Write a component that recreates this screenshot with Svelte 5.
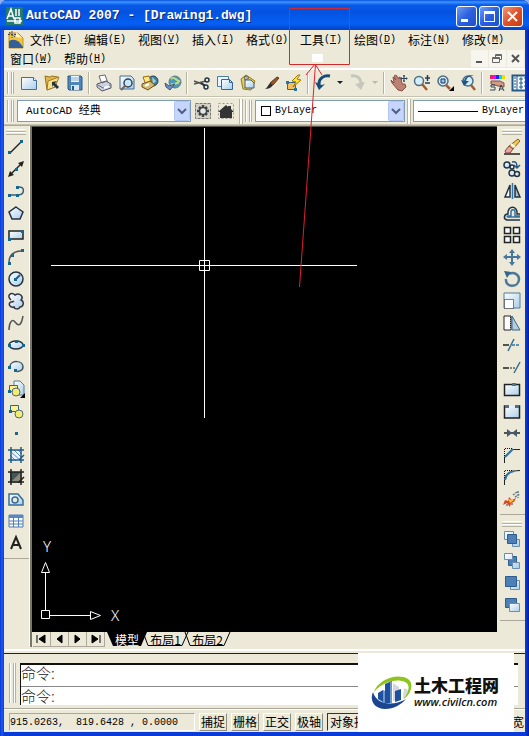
<script>
  const menus = [
    ['文件', 'F'], ['编辑', 'E'], ['视图', 'V'], ['插入', 'I'], ['格式', 'O'], ['工具', 'T'],
    ['绘图', 'D'], ['标注', 'N'], ['修改', 'M'], ['窗口', 'W'], ['帮助', 'H']
  ];

  const standard = [
    { n: 'New', d: '<path d="M1.500 3.500h12l3 3v9h-15z" fill="url(#pane)" stroke="#456f98"/><path d="M13.500 3.500v3h3" fill="#fff" stroke="#456f98"/>' },
    { n: 'Open', d: '<path d="M2 2l5 1 2-1 6 1-3 10-8 3z" fill="#e3b844" stroke="#987120"/><path d="M5 7l11-4-4 10-8 3z" fill="#f7e28c" stroke="#a37b24"/><path d="M9 8l5-1-2 2 4 4-2 2-4-4-1 2z" fill="#234"/>' },
    { n: 'Save', d: '<path d="M2 2h13l1 1v13H3l-1-1z" fill="#4f86b9" stroke="#28598c"/><path d="M5 2h8v6H5z" fill="#eef7ff"/><path d="M5 4h8M5 6h8" stroke="#8bb1cf"/><path d="M5 11h8v5H5z" fill="#d8e5ee"/><path d="M6 12h2v4H6z" fill="#275d8a"/>' },
    null,
    { n: 'Print', d: '<path d="M4 2l6-1 3 8-6 1z" fill="#fff" stroke="#667"/><path d="M2 10l9-3 5 3v4l-9 3-5-4z" fill="#cbd2df" stroke="#556"/><path d="M3 11l5 3 7-3M7 9l5-2" fill="none" stroke="#667"/><path d="M9 14l5-2" stroke="#fff" stroke-width="2"/>' },
    { n: 'Preview', d: '<path d="M2 2h11l3 3v10H2z" fill="url(#pane)" stroke="#456f98"/><circle cx="10" cy="9" r="4" fill="#c7e8fa" stroke="#345" stroke-width="1.500"/><path d="M7 12l-4 4" stroke="#875f42" stroke-width="2"/>' },
    { n: 'Publish', d: '<circle cx="12" cy="7" r="5" fill="#3f80ac" stroke="#245"/><path d="M11 3l4 4-3 3" fill="#a2d5c0"/><path d="M2 3l6-1 2 6-5 3z" fill="#ffe98a" stroke="#a60"/><path d="M1 10l8-3 5 4-7 5-6-3z" fill="#d2b96b" stroke="#665020"/><path d="M4 12l4-2" stroke="#fff" stroke-width="2"/>' },
    { n: 'DWF', d: '<circle cx="11" cy="8" r="6" fill="#4c9aba" stroke="#678"/><path d="M7 5c4-4 5 3 9 2M7 10c4 2 5-2 8-1" fill="none" stroke="#bbdf87" stroke-width="2"/><path d="M1 9l4 3 6-2-5 6-4-3z" fill="#6b8fd0" stroke="#456"/>' },
    null,
    { n: 'Cut', d: '<path d="M1 7l11 4M1 10l12-3" stroke="#555" stroke-width="1.500"/><circle cx="14" cy="6" r="2" fill="none" stroke="#234" stroke-width="1.500"/><circle cx="13" cy="13" r="2" fill="none" stroke="#234" stroke-width="1.500"/><path d="M8 9l4 3" stroke="#234" stroke-width="2"/>' },
    { n: 'Copy', d: '<path d="M1.500 2.500h11v10h-11z" fill="#e8f6ff" stroke="#4d7aa5"/><path d="M5.500 5.500h8l3 3v7h-11z" fill="url(#pane)" stroke="#346794"/><path d="M13.500 5.500v3h3" fill="none" stroke="#346794"/>' },
    { n: 'Paste', d: '<path d="M2 5l5-4 9 6-4 9-8-1z" fill="#edcd50" stroke="#917b20"/><path d="M6 6h6l3 3v5H6z" fill="url(#pane)" stroke="#365f80"/><path d="M5 3l3-1 2 2-4 2z" fill="#bbb" stroke="#665"/>' },
    { n: 'Match', d: '<path d="M15 3l2 1-6 7-3-2z" fill="#93572b" stroke="#643617"/><path d="M8 9l3 2c-2 3-5 4-8 4 2-1 3-4 5-6z" fill="#303030"/>' },
    { n: 'Block', d: '<path d="M2.500 8.500h8v7h-8z" fill="#efc05d" stroke="#3b668c"/><path d="M13 1L7 7l4 1-3 5 8-7-4-1 3-4z" fill="#ffe33b" stroke="#a87800"/><path d="M1 7h3v3H1zM9 14h3v3H9z" fill="#2673a4"/>' },
    null,
    { n: 'Undo', d: '<path d="M16 2C10 1 5 4 5 10" fill="none" stroke="#174b78" stroke-width="3"/><path d="M1 8l4 8 6-6-3 1z" fill="#174b78"/>' },
    'dd',
    { n: 'Redo', d: '<path d="M2 2c6-1 10 2 10 8" fill="none" stroke="#c6c6be" stroke-width="3"/><path d="M16 8l-4 8-6-6z" fill="#c6c6be"/>' },
    'ddoff',
    null,
    { n: 'Pan', d: '<path d="M3 3l3 3-2-4 2-1 3 4 0-2 2 1 1 6 3 0 1 3-4 4-4-1-6-7-1-3 3 3z" fill="#bd8173" stroke="#8b5148"/><path d="M14 1v7M10.500 4.500h7M13 2h2M13 7h2M11.500 3.500v2M16.500 3.500v2" stroke="#243e55"/>' },
    { n: 'Zoom', d: '<circle cx="6" cy="7" r="4.500" fill="#d4edf8" stroke="#4b6f87" stroke-width="1.500"/><path d="M9 10l5 6" stroke="#a15d37" stroke-width="2.500"/><path d="M12 4h5M14.500 1v6M12 9h5" stroke="#253e50" stroke-width="1.500"/>' },
    { n: 'Zoom window', d: '<circle cx="7" cy="7" r="5" fill="#d4edf8" stroke="#4b6f87" stroke-width="1.500"/><path d="M5 5h4v4H5z" fill="#8cc7e8" stroke="#236"/><path d="M10 11l4 4" stroke="#a15d37" stroke-width="2.500"/><path d="M18 12v5h-5z"/>' },
    { n: 'Zoom previous', d: '<circle cx="9" cy="7" r="5" fill="#d4edf8" stroke="#4b6f87" stroke-width="1.500"/><path d="M12 11l4 5" stroke="#a15d37" stroke-width="2.500"/><path d="M15 2c-5 0-7 1-8 5l3 0-5 5-3-6 3 1C6 3 10 0 15 2z" fill="#1f5584"/>' },
    null,
    { n: 'Properties', d: '<path d="M2 1h3v4H2z" fill="#e91e63"/><path d="M5 1h3v4H5z" fill="#f0f"/><path d="M8 1h3v4H8z" fill="#22f"/><path d="M11 1h3v4h-3z" fill="#0dd"/><path d="M14 1h3v4h-3z" fill="#ed0"/><path d="M3 7h9l4 2v4l-6-1-7-2z" fill="#d29a82" stroke="#805343"/><path d="M7 11H3v2h4v3H2M11 17l2-6 3 6M11 15h4" fill="none" stroke="#345"/>' },
    { n: 'Design center', d: '<path d="M1.500 1.500h15v15h-15z" fill="#f4faff" stroke="#245986" stroke-width="2"/><path d="M6 2v14M9 4h2v2H9zM13 4h2M9 8h2v2H9zM13 8h2M9 12h2v2H9zM13 12h2M3 4h2M3 7h2M3 10h2M3 13h2" fill="none" stroke="#245986"/>' }
  ];

  const draw = [
    { n: 'Line', d: '<path d="M3 15L15 3" stroke="#222" stroke-width="1.500"/><path d="M1 13h3v3H1zM13 2h3v3h-3z" fill="#17668e"/>' },
    { n: 'Construction line', d: '<path d="M3 15L15 3" stroke="#222" stroke-width="1.500"/><path d="M1 17l2-6 4 4zM17 1l-2 6-4-4z" fill="#222"/><path d="M8 8h3v3H8z" fill="#17668e"/>' },
    { n: 'Polyline', d: '<path d="M2 13h9M11 5c7-1 7 7 1 8" fill="none" stroke="#335d79" stroke-width="1.500"/><path d="M1 12h3v3H1zM9 12h3v3H9zM9 4h3v3H9z" fill="#17668e"/>' },
    { n: 'Polygon', d: '<path d="M9 3l7 5-3 7H5L2 8z" fill="url(#pane)" stroke="#223344" stroke-width="1.500"/>' },
    { n: 'Rectangle', d: '<path d="M2 5h14v8H2z" fill="url(#pane)" stroke="#222" stroke-width="1.500"/><path d="M1 12h3v3H1zM14 4h3v3h-3z" fill="#17668e"/>' },
    { n: 'Arc', d: '<path d="M2 15C2 8 6 3 15 3" fill="none" stroke="#555" stroke-width="1.500"/><path d="M1 14h3v3H1zM14 1h3v3h-3zM4 6h3v3H4z" fill="#17668e"/>' },
    { n: 'Circle', d: '<circle cx="9" cy="9" r="7" fill="url(#pane)" stroke="#234" stroke-width="1.500"/><path d="M9 9l4-4" stroke="#175e8e" stroke-width="2"/><path d="M7 8h3v3H7z" fill="#17668e"/>' },
    { n: 'Revision cloud', d: '<path d="M4 8C-1 4 4-1 8 3c5-3 9 2 6 5 4 2 2 7-1 7-1 3-6 2-6 0-5 1-6-4-3-5 0 0 2 0 3-1" fill="url(#pane)" stroke="#334" stroke-width="1.500"/>' },
    { n: 'Spline', d: '<path d="M2 16C2 9 5 4 8 8s6 5 8-6" fill="none" stroke="#555" stroke-width="1.500"/>' },
    { n: 'Ellipse', d: '<ellipse cx="9" cy="9" rx="7" ry="4" fill="url(#pane)" stroke="#234" stroke-width="1.500"/><path d="M1 8h3v3H1zM8 4h3v3H8zM15 8h3v3h-3z" fill="#17668e"/>' },
    { n: 'Ellipse arc', d: '<path d="M3 8c1-6 13-6 13 1 0 4-5 5-8 4" fill="url(#pane)" stroke="#456" stroke-width="1.500"/><path d="M1 8h3v3H1zM7 11h3v3H7z" fill="#17668e"/>' },
    { n: 'Insert block', d: '<path d="M7 1h6l4 4v10H7z" fill="url(#pane)" stroke="#567d9b"/><path d="M2.500 5.500h8v6h-8z" fill="#fff28d" stroke="#256b8e"/><circle cx="9" cy="12" r="4" fill="#f1ed70" stroke="#567"/><path d="M1 10h3v3H1z" fill="#17668e"/><path d="M18 13v5h-5z"/>' },
    { n: 'Make block', d: '<path d="M3.500 3.500h8v6h-8z" fill="#fff28d" stroke="#256b8e"/><circle cx="12" cy="12" r="4" fill="#f1ed70" stroke="#567"/><path d="M2 8h3v3H2z" fill="#17668e"/>' },
    { n: 'Point', d: '<path d="M8 8h3v3H8z" fill="#17668e"/>' },
    { n: 'Hatch', d: '<path d="M3 4h12v11H3z" fill="#e8f5ff"/><path d="M3 5l11 10M7 4l8 8M11 4l4 4M3 9l6 6M3 12l3 3" stroke="#6393b8"/><path d="M4 1v16M14 1v16M1 4h16M1 14h16M12 14l5-5" stroke="#245986" stroke-width="1.500"/>' },
    { n: 'Gradient', d: '<path d="M3 4h12v11H3z" fill="#455"/><path d="M4 14l9-9h2v5l-5 5H4z" fill="#8a8b78"/><path d="M4 1v16M14 1v16M1 4h16M1 14h16M12 14l5-5" stroke="#222" stroke-width="1.500"/>' },
    { n: 'Region', d: '<path d="M2 4h9l5 6v5H2z" fill="url(#pane)" stroke="#376e98" stroke-width="1.500"/><circle cx="8" cy="10" r="3" fill="#ece9d8" stroke="#376e98" stroke-width="1.500"/>' },
    { n: 'Table', d: '<path d="M2 3h14v12H2z" fill="#fff" stroke="#4f7db3"/><path d="M2 3h14v3H2z" fill="#5b86c5"/><path d="M2 9h14M2 12h14M6.500 6v9M11.500 6v9" stroke="#4f7db3"/>' },
    { n: 'Text', d: '<path d="M4 15L9 3l5 12M6 11h6" fill="none" stroke="#222" stroke-width="2"/>' }
  ];

  const modify = [
    { n: 'Erase', d: '<path d="M1 16h16" stroke="#222" stroke-width="1.500"/><path d="M15 1l2 2-7 8-4-3z" fill="#f3c84b" stroke="#865f23"/><path d="M6 8l4 3-3 4H3l-1-2z" fill="#e7a8a2" stroke="#844"/><path d="M8 6l4 3" stroke="#fff" stroke-width="2"/>' },
    { n: 'Copy objects', d: '<circle cx="4" cy="5" r="3" fill="url(#pane)" stroke="#234" stroke-width="1.500"/><circle cx="9" cy="7" r="2" fill="none" stroke="#234" stroke-width="1.500"/><circle cx="9" cy="13" r="3" fill="#dce9ef" stroke="#234" stroke-width="1.500"/><circle cx="14" cy="14" r="2.500" fill="#dce9ef" stroke="#234" stroke-width="1.500"/><path d="M9 2c4-1 5 1 5 5M11 5l3 3 3-3" fill="none" stroke="#245986" stroke-width="1.500"/>' },
    { n: 'Mirror', d: '<path d="M7 3v12H2z" fill="#fff" stroke="#234" stroke-width="1.500"/><path d="M12 3v12h5z" fill="#aebdca" stroke="#234" stroke-width="1.500"/><path d="M9.500 1v16" stroke="#3276aa" stroke-width="1.500"/>' },
    { n: 'Offset', d: '<path d="M17 16H4c-4-1-3-6 1-6C4 1 15 1 14 10h3" fill="none" stroke="#234" stroke-width="1.500"/><path d="M17 13H5c-1 0-1-1 0-1h3V8c0-3 4-3 4 0v4h5" fill="none" stroke="#3472a0" stroke-width="1.500"/>' },
    { n: 'Array', d: '<path d="M1.500 1.500h6v6h-6zM10.500 1.500h6v6h-6zM1.500 10.500h6v6h-6zM10.500 10.500h6v6h-6z" fill="#f6fbff" stroke="#222" stroke-width="1.500"/>' },
    { n: 'Move', d: '<path d="M9 1l3 4h-2v3h4V6l4 3-4 3v-2h-4v4h2l-3 4-3-4h2v-4H4v2L0 9l4-3v2h4V5H6z" fill="#47769c"/>' },
    { n: 'Rotate', d: '<path d="M6 4c5-3 10 1 10 5 0 9-14 9-13 0" fill="none" stroke="#4c789c" stroke-width="2.500"/><path d="M1 1l7 1-4 6z" fill="#34658d"/>' },
    { n: 'Scale', d: '<path d="M1 1h16v15H1z" fill="url(#pane)" stroke="#4d7da1"/><path d="M1.500 7.500h9v9h-9z" fill="#fff" stroke="#111" stroke-dasharray="1 1"/>' },
    { n: 'Stretch', d: '<path d="M1 2h7v14H1z" fill="#fff" stroke="#222"/><path d="M9 2l8 14H9z" fill="#b8ccdc" stroke="#31688f"/><path d="M7.500 3v12" stroke="#222" stroke-dasharray="1 1"/>' },
    { n: 'Trim', d: '<path d="M0 9h6" stroke="#222" stroke-width="1.500"/><path d="M9 9h8" stroke="#287aa5" stroke-dasharray="3 1" stroke-width="1.500"/><path d="M5 15l6-12" stroke="#397092" stroke-width="1.500"/>' },
    { n: 'Extend', d: '<path d="M0 10h6" stroke="#222" stroke-width="1.500"/><path d="M7 10h5" stroke="#222" stroke-dasharray="2 1"/><path d="M11 15l6-11" stroke="#397092" stroke-width="1.500"/>' },
    { n: 'Break at point', d: '<path d="M1.500 4.500h15v11h-15z" fill="url(#pane)" stroke="#222" stroke-width="1.500"/><path d="M9 3h4v3H9z" fill="#4e7188"/>' },
    { n: 'Break', d: '<path d="M4 4H1.500v12h15V4H14" fill="url(#pane)" stroke="#222" stroke-width="1.500"/><path d="M2 3h4v3H2zM12 3h4v3h-4z" fill="#4e7188"/>' },
    { n: 'Join', d: '<path d="M1 9h16" stroke="#222" stroke-width="1.500"/><path d="M4 5l5 4-5 4zM14 5L9 9l5 4z" fill="#45596a"/>' },
    { n: 'Chamfer', d: '<path d="M1.500 17v-6L9 3.500h8" fill="none" stroke="#222"/><path d="M2 11l8-8" stroke="#39749f" stroke-width="2"/><path d="M1.500 10V2.500H9" fill="none" stroke="#111" stroke-dasharray="1 1"/>' },
    { n: 'Fillet', d: '<path d="M1.500 17v-5C2 6 5 3 17 2.500" fill="none" stroke="#222"/><path d="M2 12C3 6 6 4 11 3" fill="none" stroke="#39749f" stroke-width="2"/><path d="M1.500 10V2.500H9" fill="none" stroke="#111" stroke-dasharray="1 1"/>' },
    { n: 'Explode', d: '<path d="M2 10l3 1 1-4 3 3 4-2-2 4-3 1-1 4-3-4-4 2z" fill="#d84325"/><path d="M5 9l6 1-4 3z" fill="#ffc32d"/><path d="M10 5l4-3M12 7l5-3M15 1v7M3 15h2M8 14h3" stroke="#697787" stroke-dasharray="2 1" stroke-width="1.500"/>' }
  ];

  const order = [
    { n: 'Bring to front', d: '<path d="M1.500 1.500h9v8h-9zM9.500 9.500h7v7h-7z" fill="url(#pane)" stroke="#6d8dac"/><path d="M4.500 4.500h9v9h-9z" fill="#4f80b5" stroke="#2c5c90"/>' },
    { n: 'Send to back', d: '<path d="M5.500 4.500h8v9h-8z" fill="#4f80b5" stroke="#2c5c90"/><path d="M1.500 1.500h8v6h-8zM9.500 10.500h7v6h-7z" fill="url(#pane)" stroke="#6d8dac"/>' },
    { n: 'Bring above', d: '<path d="M7.500 6.500h9v9h-9z" fill="url(#pane)" stroke="#6d8dac"/><path d="M2.500 2.500h11v10h-11z" fill="#4f80b5" stroke="#2c5c90"/>' },
    { n: 'Send under', d: '<path d="M2.500 2.500h11v9h-11z" fill="#4f80b5" stroke="#2c5c90"/><path d="M6.500 7.500h10v8h-10z" fill="url(#pane)" stroke="#6d8dac"/>' }
  ];

  const nav = [
    { n: 'First', d: 'M4 3v8M12 3v8L6 7z' },
    { n: 'Previous', d: 'M11 3v8L6 7z' },
    { n: 'Next', d: 'M6 3v8l5-4z' },
    { n: 'Last', d: 'M5 3v8l6-4zM13 3v8' }
  ];
</script>

{#snippet tool(t)}
  <button class="tool" aria-label={t.n}>
    <svg width="18" height="18" viewBox="0 0 18 18" fill="#000">{@html t.d}</svg>
  </button>
{/snippet}

{#snippet arrow()}
  <svg class="drop" width="16" height="20" viewBox="0 0 16 20" aria-hidden="true">
    <rect x="0.500" y="0.500" width="15" height="19" rx="1" fill="#c6d5fb" stroke="#b2c5f3" />
    <path d="M4 8l4 4 4-4" fill="none" stroke="#4d6185" stroke-width="2" />
  </svg>
{/snippet}

<div class="window">
  <header class="title">
    <svg width="17" height="18" viewBox="0 0 17 18" aria-hidden="true">
      <path d="M0 0h17v18H0z" fill="#237a70" />
      <path d="M1 12L5 2l3 10M2 9h5M10 2v7M13 2v7M1 14h15M9 11h5v5H9z" fill="none" stroke="#fff" stroke-width="1.500" />
    </svg>
    <h1>AutoCAD 2007 - [Drawing1.dwg]</h1>
    <div class="caption">
      <button aria-label="Minimize"><svg width="19" height="19"><path d="M4 12h7v3H4z" fill="#fff" /></svg></button>
      <button aria-label="Maximize"><svg width="19" height="19"><path d="M4 4h11v11H4zM5 7v7h9V7z" fill="#fff" fill-rule="evenodd" /></svg></button>
      <button class="close" aria-label="Close"><svg width="19" height="19"><path d="M5 5l9 9M14 5l-9 9" stroke="#fff" stroke-width="2" /></svg></button>
    </div>
  </header>

  <div class="body">
    <nav class="menu">
      <svg class="doc" width="16" height="18" viewBox="0 0 16 18" aria-hidden="true">
        <path d="M1 2h9l5 5v10H1z" fill="#f2c53d" stroke="#c29424" />
        <path d="M1 10c5-3 10-1 14 6v1H1z" fill="#345f98" />
        <path d="M8 1l6 6-6-1z" fill="#fff5c8" />
        <path d="M4 0v7M0 3.500h8M1 1l6 5" stroke="#445" stroke-dasharray="2 1" />
      </svg>
      {#each menus as [name, key]}
        <button class="item">{name}<span class="key">(<u>{key}</u>)</span></button>
      {/each}
      <div class="mdi">
        <button aria-label="Minimize drawing"><svg width="16" height="16"><path d="M5 10h6v2H5z" fill="#555" /></svg></button>
        <button aria-label="Restore drawing"><svg width="16" height="16"><path d="M6.500 6V3.500h6v5H11M6 4.500h7M3.500 6.500h7v5h-7zM3 7.500h8" fill="none" stroke="#666" /></svg></button>
        <button aria-label="Close drawing"><svg width="16" height="16"><path d="M5 4l7 7M12 4l-7 7" stroke="#555" stroke-width="2" /></svg></button>
      </div>
    </nav>

    <div class="bar">
      <i class="grip"></i>
      {#each standard as t}
        {#if t === null}
          <i class="sep"></i>
        {:else if t === 'dd' || t === 'ddoff'}
          <button class="mini" class:off={t === 'ddoff'} aria-label="History"><svg width="6" height="4"><path d="M0 0h6L3 3z" fill="currentColor" /></svg></button>
        {:else}
          {@render tool(t)}
        {/if}
      {/each}
    </div>

    <div class="bar">
      <i class="grip"></i>
      <div class="combo workspace">
        <select aria-label="Workspace"><option>AutoCAD 经典</option></select>
        {@render arrow()}
      </div>
      {@render tool({ n: 'Workspace settings', d: '<path d="M1.500 1.500h15v15h-15z" fill="#d4d3c8" stroke="#777" stroke-dasharray="3 1"/><path d="M9 3v12M3 9h12M5 5l8 8M13 5l-8 8" stroke="#444" stroke-width="2.500"/><circle cx="9" cy="9" r="3.500" fill="#dfe8ed" stroke="#444" stroke-width="1.500"/>' })}
      {@render tool({ n: 'My workspace', d: '<path d="M1.500 1.500h15v15h-15z" fill="none" stroke="#999" stroke-dasharray="2 2"/><path d="M1 10l8-7 2 2V4h3v3l3 3h-2v6H3v-6z" fill="#333"/>' })}
      <i class="edge"></i>
      <i class="grip"></i>
      <div class="combo colour">
        <i class="swatch"></i>
        <select aria-label="Colour"><option>ByLayer</option></select>
        {@render arrow()}
      </div>
      <i class="edge"></i>
      <div class="combo linetype">
        <i class="stroke"></i>
        <select aria-label="Linetype"><option>ByLayer</option></select>
      </div>
    </div>

    <main>
      <aside>
        <div class="palette">
          <i class="hgrip"></i>
          {#each draw as t}{@render tool(t)}{/each}
        </div>
      </aside>

      <section>
        <div class="canvas">
          <svg class="cross" width="326" height="292" viewBox="0 0 326 292" aria-hidden="true">
            <path d="M172.500 1v290M19 138.500h306M167.500 133.500h10v10h-10z" fill="none" stroke="#fff" />
          </svg>
          <svg class="ucs" width="94" height="96" viewBox="0 0 94 96" fill="none" stroke="#fff">
            <path d="M9.500 74.500h8v8h-8zM13.500 74V36M18 79.500h40M13.500 26.500l4 10h-8zM58.500 75.500l10 4-10 4z" />
            <text x="11" y="16" stroke="none" fill="#fff">Y</text>
            <text x="79" y="85" stroke="none" fill="#fff">X</text>
          </svg>
        </div>
        <div class="tabs">
          {#each nav as n}
            <button class="nav" aria-label={n.n}><svg width="17" height="14"><path d={n.d} fill="#000" stroke="#000" /></svg></button>
          {/each}
          <button class="tab model"><svg viewBox="0 0 40 15" preserveAspectRatio="none"><path d="M0 0l6 14h28l6-14z" fill="#000" /></svg><span>模型</span></button>
          {#each ['布局1', '布局2'] as t}
            <button class="tab"><svg viewBox="0 0 47 15" preserveAspectRatio="none"><path d="M1 0l5 13.500h34L46 0" fill="none" stroke="#000" /></svg><span>{t}</span></button>
          {/each}
        </div>
      </section>

      <aside class="right">
        <div class="palette">
          <i class="hgrip"></i>
          {#each modify as t}{@render tool(t)}{/each}
        </div>
        <div class="palette">
          <i class="hgrip"></i>
          {#each order as t}{@render tool(t)}{/each}
        </div>
      </aside>
    </main>

    <div class="command">
      <i class="grip"></i>
      <div class="console">
        <div class="history">命令:</div>
        <div class="prompt"><label for="cmd">命令:</label><input id="cmd" type="text" autocomplete="off" /></div>
      </div>
    </div>

    <footer>
      <output>915.0263,&nbsp; 819.6428 , 0.0000</output>
      <button>捕捉</button>
      <button>栅格</button>
      <button>正交</button>
      <button>极轴</button>
      <button class="on">对象捕捉</button>
      <button class="last">宽</button>
    </footer>
  </div>

  <svg class="note" width="62" height="284" viewBox="0 0 62 284" fill="none" aria-hidden="true">
    <path d="M24 47h11v8H24z" fill="#fff" />
    <path d="M1.500 1.500h60v56h-60z" stroke="#d22b2b" />
    <path d="M11.500 280L27.500 57M18 68l9-11 7 11" stroke="#e0202c" />
  </svg>

  <div class="brand">
    <svg width="42" height="36" viewBox="0 0 42 36" aria-hidden="true">
      <path d="M3 17C6 6 25-3 37 4c7 5 2 17-5 20 6-7 8-14 2-17C26 3 11 7 3 17z" fill="#8fc31f" />
      <path d="M2 17c-4 9 2 17 12 17 9 0 17-5 21-10-9 6-29 8-33-7z" fill="#1c4591" />
      <path d="M22 8l6 4v12l-6 2zM33 13l4 2-3 7-2 1z" fill="#d3d7dc" />
      <path d="M7 18l5-3v12l-5-3zM14 9l7-3v22h-7zM24 16l6-2v11l-6 2z" fill="#1f4f9f" />
      <path d="M12 15l2 1v12h-2zM19 7l2-1v22h-2z" fill="#6d96cd" />
    </svg>
    <div class="words"><strong>土木工程网</strong><em>www.civilcn.com</em></div>
  </div>

  <svg class="defs" width="0" height="0" aria-hidden="true">
    <defs>
      <linearGradient id="pane" x1="0" y1="0" x2="1" y2="1">
        <stop offset="0" stop-color="#fff" />
        <stop offset="1" stop-color="#a9cdea" />
      </linearGradient>
    </defs>
  </svg>
</div>

<style>
  :global(body) { margin: 0; background: #8fb0e8; }
  * { box-sizing: border-box; }
  svg { display: block; flex: none; }
  i { display: block; flex: none; }
  button { padding: 0; border: 0; background: none; font: inherit; color: inherit; }

  .window {
    position: relative;
    display: flex;
    flex-direction: column;
    min-height: 100vh;
    overflow: hidden;
    padding: 0 4px 4px;
    border-radius: 7px 7px 0 0;
    background: linear-gradient(90deg, #0a34d8, #1c5cf0 2px, #0a3ad8 4px, #0a3ad8 calc(100% - 4px), #0731c8 calc(100% - 2px), #001c98);
    font: 12px/18px "Noto Sans CJK SC", sans-serif;
    color: #000;
  }

  .title {
    display: flex;
    align-items: center;
    gap: 3px;
    height: 30px;
    margin: 0 -4px;
    padding: 2px 6px 0;
    background: linear-gradient(#0a50d8, #3d95ff 2px, #0a5ae8 5px, #0453e0 12px, #0560f5 24px, #0345c8 29px);
  }
  h1 {
    flex: 1;
    margin: 0;
    font: bold 13px/20px "Liberation Mono", monospace;
    color: #fff;
    text-shadow: 1px 1px #0a2a80;
    white-space: nowrap;
  }
  .caption { display: flex; gap: 2px; }
  .caption button {
    width: 21px;
    height: 21px;
    border: 1px solid #fff;
    border-radius: 3px;
    background: linear-gradient(135deg, #6f9cf5, #2a5fe0 50%, #2150c8);
  }
  .caption .close { background: linear-gradient(135deg, #f09a7c, #e0502a 50%, #c83c10); }

  .body { flex: 1; display: flex; flex-direction: column; min-width: 0; background: #ece9d8; }

  .menu { display: flex; flex-wrap: wrap; align-items: center; border-bottom: 1px solid #fff; }
  .doc { margin: 0 0 0 4px; }
  .item { width: 54px; height: 19px; padding: 0 6px; display: flex; align-items: center; white-space: nowrap; }
  .key { font: 10px/18px "Liberation Mono", monospace; }
  .mdi { display: flex; gap: 1px; margin-left: auto; padding-right: 1px; }
  .mdi button { width: 17px; height: 17px; background: #f6f5ee; }

  .bar {
    display: flex;
    align-items: center;
    height: 28px;
    overflow: hidden;
    padding-left: 3px;
    border-top: 1px solid #fff;
    border-bottom: 1px solid #c5c2b0;
  }
  .bar > * { flex: none; }
  .grip {
    width: 7px;
    height: 22px;
    margin-right: 3px;
    border: solid #b5b29f;
    border-width: 0 1px;
    background: linear-gradient(90deg, #fff 1px, #ece9d8 1px 3px, #b5b29f 3px 4px, #fff 4px);
  }
  .tool { display: flex; align-items: center; justify-content: center; width: 23px; height: 22px; }
  .sep { width: 6px; height: 22px; background: linear-gradient(90deg, transparent 2px, #b5b29f 2px 3px, #fff 3px 4px, transparent 4px); }
  .mini { display: flex; align-items: center; justify-content: center; width: 12px; height: 22px; color: #123; }
  .off { color: #bbb9ab; }
  .edge { width: 4px; height: 25px; margin: 0 2px; border: solid #b5b29f; border-width: 0 1px; background: #fff; }

  .combo { position: relative; display: flex; align-items: center; height: 22px; border: 1px solid #7f9db9; background: #fff; }
  .combo select {
    flex: 1;
    min-width: 0;
    height: 20px;
    padding: 0 0 0 4px;
    border: 0;
    appearance: none;
    background: transparent;
    font: 10px/18px "Liberation Mono", "Noto Sans CJK SC", monospace;
    color: #000;
  }
  .drop { pointer-events: none; }
  .workspace { width: 174px; }
  .workspace select { padding-left: 8px; font-size: 11px; }
  .colour { width: 150px; padding-left: 5px; }
  .swatch { width: 10px; height: 10px; border: 1px solid #000; }
  .linetype { width: 150px; padding-left: 4px; }
  .stroke { width: 60px; height: 1px; background: #000; }

  main { flex: 1; display: flex; min-height: 0; border-top: 1px solid #aca899; }
  aside { width: 26px; flex: none; border-right: 1px solid #fff; }
  .right { width: 25px; border: 0; }
  .palette { display: flex; flex-direction: column; align-items: center; padding: 0 2px 4px 0; border-bottom: 1px solid #aca899; }
  .hgrip {
    width: 20px;
    height: 6px;
    margin: 3px 0 1px;
    border: solid #b5b29f;
    border-width: 0 0 1px;
    background: linear-gradient(#fff 1px, #ece9d8 1px 2px, #b5b29f 2px 3px, #fff 3px 4px, #ece9d8 4px);
  }
  .palette + .palette { margin-top: 3px; }

  section { flex: 1; display: flex; flex-direction: column; min-width: 0; border-left: 2px solid #77756a; }
  .canvas { position: relative; flex: 1; border-top: 1px solid #55534a; margin-right: 3px; background: #000; }
  .cross { position: absolute; top: 0; left: 0; }
  .ucs { position: absolute; bottom: 0; left: 0; font: 15px "Noto Sans", sans-serif; font-weight: 300; }

  .tabs { display: flex; height: 15px; padding-left: 1px; }
  .nav { width: 18px; border-right: 1px solid #aca899; border-bottom: 1px solid #aca899; }
  .tab { position: relative; width: 47px; margin-left: -5px; line-height: 12px; }
  .tab svg { position: absolute; inset: 0; width: 100%; height: 100%; }
  .tab span { position: relative; }
  .model { width: 40px; margin-left: 2px; color: #fff; z-index: 1; }

  .command {
    display: flex;
    margin-top: 2px;
    padding: 12px 7px 3px 5px;
    border-top: 2px solid #fff;
    border-bottom: 1px solid #aca899;
    background: linear-gradient(#ece9d8 2px, #222 2px 3px, #ece9d8 3px);
  }
  .command .grip { height: 40px; margin: 0 4px 0 0; }
  .console { flex: 1; border: 1px solid #111; border-width: 2px 0 0 1px; background: #fff; font: 15px/20px "Noto Sans CJK SC", sans-serif; font-weight: 300; color: #222; }
  .history { height: 22px; line-height: 16px; border-bottom: 1px solid #888; }
  .prompt { display: flex; height: 18px; line-height: 18px; }
  .prompt input { flex: 1; min-width: 0; padding: 0; border: 0; outline: 0; background: none; font: inherit; }

  footer { display: flex; align-items: center; gap: 4px; height: 23px; padding: 2px 0 1px 5px; border-top: 1px solid #fff; overflow: hidden; }
  output { flex: none; width: 186px; height: 18px; border: 1px solid #aca899; border-color: #aca899 #fff #fff #aca899; font: 10px/17px "Liberation Mono", monospace; white-space: pre; }
  footer button { flex: none; width: 28px; height: 18px; line-height: 16px; border: 1px solid #aca899; border-color: #fff #8f8c7d #8f8c7d #fff; white-space: nowrap; }
  footer .on { width: 54px; border-color: #333 #fff #fff #333; }
  footer .last { width: 14px; margin-left: auto; border-color: transparent; }

  .note { position: absolute; top: 7px; left: 288px; pointer-events: none; }
  .brand {
    position: absolute;
    right: 15px;
    bottom: 4px;
    display: flex;
    align-items: center;
    gap: 1px;
    width: 156px;
    height: 79px;
    padding-left: 13px;
    background: #fff;
  }
  .words { display: flex; flex-direction: column; color: #111; white-space: nowrap; }
  .words strong { font: 900 17px/18px "Noto Sans CJK SC", sans-serif; }
  .words em { font: italic 600 11px/16px "Open Sans", sans-serif; }
  .defs { position: absolute; }
</style>
